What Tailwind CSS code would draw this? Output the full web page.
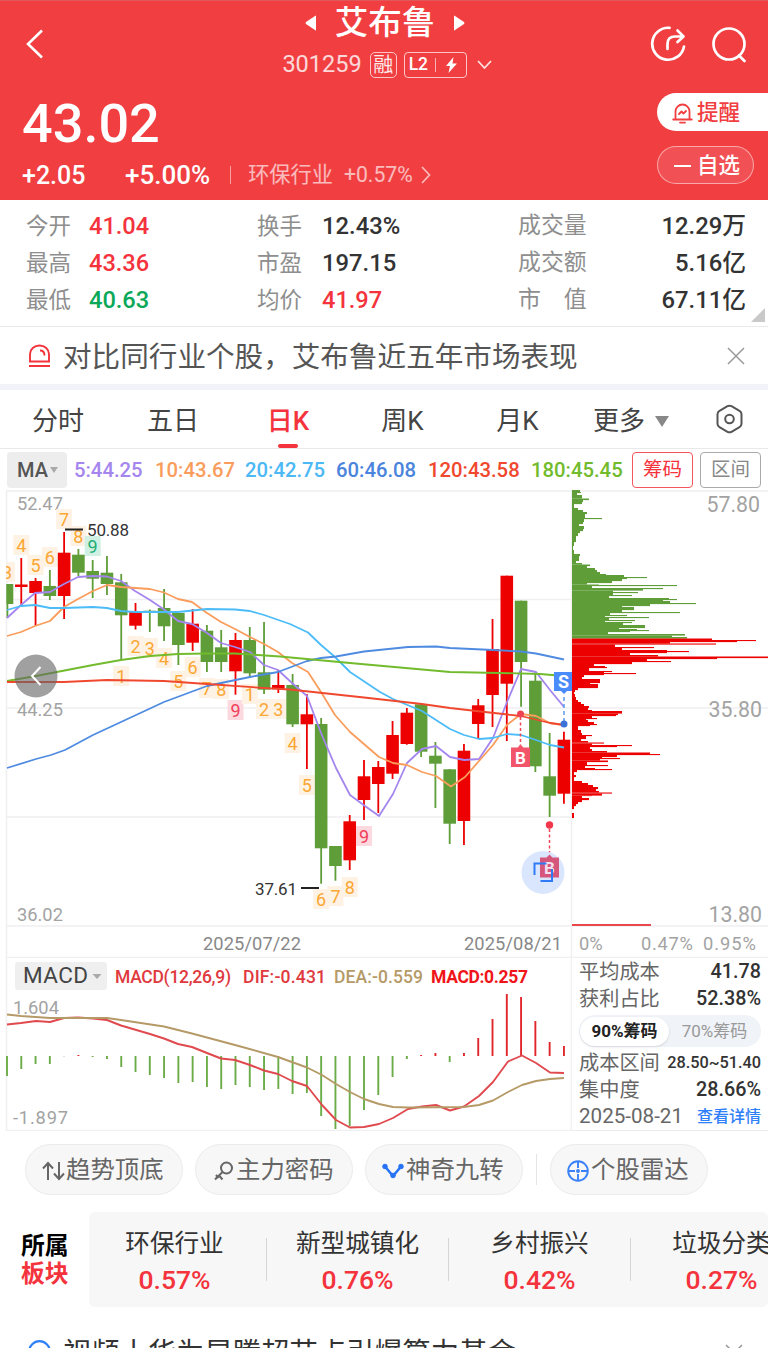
<!doctype html>
<html lang="zh-CN">
  <head>
    <title>艾布鲁 301259</title>
    <meta charset="UTF-8" />
    <meta name="viewport" content="width=device-width, initial-scale=1" />
    <script src="https://cdn.jsdelivr.net/npm/@tailwindcss/browser@4"></script>
  </head>
  <body
    class="w-[768px] h-[1348px] overflow-hidden bg-white text-[#333] leading-none whitespace-nowrap font-['Roboto','Noto_Sans_CJK_SC',sans-serif]"
  >
    <!--Header-->
    <header class="h-[200px] bg-[#f03e41] text-white border-t border-[#e0585a] flex flex-col">
      <div class="h-[88px] grid grid-cols-[283px_208px_1fr]">
        <div class="pl-[26px] pt-[28px]">
          <svg width="18" height="30" viewBox="0 0 18 30" fill="none" stroke="#fff" stroke-width="2.6"><path d="M16 1.5 2 15 16 28.500" /></svg>
        </div>
        <div class="flex flex-col items-center pt-[1px]">
          <div class="flex items-center h-[42px] gap-[18px] pr-[4px]">
            <svg width="12" height="16" viewBox="0 0 12 16" fill="#fff"><path d="M11 1v14q0 1-1 0L1 9q-1-1 0-2l9-6q1-1 1 0Z" /></svg>
            <h1 class="text-[33.5px] font-medium">艾布鲁</h1>
            <svg width="12" height="16" viewBox="0 0 12 16" fill="#fff"><path d="M1 1v14q0 1 1 0l9-6q1-1 0-2L2 1Q1 0 1 1Z" /></svg>
          </div>
          <div class="flex items-center h-[42px]">
            <span class="text-[23.500px] text-white/80">301259</span>
            <span class="ml-[8px] w-[27px] h-[26px] border-[1.500px] border-white/70 rounded-[5px] text-[20px] flex items-center justify-center text-white/90">融</span>
            <span class="ml-[7px] w-[63px] h-[26px] border-[1.500px] border-white/70 rounded-[4px] text-[17.500px] font-medium flex items-center pl-[4px]">
              L2
              <i class="w-px h-[14px] bg-white/60 ml-[7px]"></i>
              <svg class="ml-[9px]" width="13" height="16" viewBox="0 0 13 16" fill="#fff"><path d="M8.500 0 1 9h4l-1.500 7L12 6.500H7.500Z" /></svg>
            </span>
            <svg class="ml-[10px]" width="15" height="10" viewBox="0 0 15 10" fill="none" stroke="#fff" stroke-opacity=".85" stroke-width="1.800"><path d="m1 1 6.500 7L14 1" /></svg>
          </div>
        </div>
        <div class="flex justify-end gap-[26px] pt-[25px] pr-[22px]">
          <svg width="36" height="37" viewBox="0 0 36 37" fill="none" stroke="#fff" stroke-width="2.700" stroke-linecap="round" stroke-linejoin="round">
            <path d="M19.500 1.800A16 16 0 1 0 34 20.500" />
            <path d="M17.500 23v-5q0-7.500 7.500-7.500h8M27.500 4.500l6 6-6 5.500" />
          </svg>
          <svg width="34" height="37" viewBox="0 0 34 37" fill="none" stroke="#fff" stroke-width="2.700" stroke-linecap="round">
            <circle cx="17" cy="18" r="15.500" />
            <path d="m27 29.500 5.500 5.500" />
          </svg>
        </div>
      </div>
      <div class="flex justify-between">
        <div class="pl-[22px]">
          <div class="text-[54px] font-medium h-[69px] flex items-center">43.02</div>
          <div class="flex items-center h-[34px]">
            <span class="text-[25px] font-medium w-[103px]">+2.05</span>
            <span class="text-[26px] font-medium">+5.00%</span>
            <i class="w-px h-[18px] bg-white/50 ml-[20px] mr-[17px]"></i>
            <span class="text-[21.200px] text-white/65">环保行业</span>
            <span class="text-[21.200px] text-white/65 ml-[11px]">+0.57%</span>
            <svg class="ml-[8px]" width="10" height="18" viewBox="0 0 10 18" fill="none" stroke="#fff" stroke-opacity=".65" stroke-width="1.700"><path d="m1 1 7.500 8L1 17" /></svg>
          </div>
        </div>
        <div class="w-[111px] pt-[4px]">
          <div class="h-[38px] bg-white rounded-l-full text-[#f03e41] flex items-center pl-[15px] pt-[1px] text-[21.500px] font-medium">
            <svg class="mr-[4px]" width="21" height="22" viewBox="0 0 21 22" fill="none" stroke="#f03e41" stroke-width="1.800" stroke-linecap="round" stroke-linejoin="round">
              <path d="M3.500 17V9.500a7 7 0 0 1 14 0V17M1.200 17.500h18.600M8 20.600h5M7 12l2.500-2.500 2 2L14 9" />
            </svg>
            提醒
          </div>
          <div class="mt-[15px] w-[97px] h-[38px] rounded-full border border-white/50 bg-white/10 flex items-center pl-[16px] pt-[2px] text-[21.500px] font-medium">
            <i class="w-[17px] h-[2px] bg-white mr-[6px]"></i>自选
          </div>
        </div>
      </div>
    </header>

    <!--Quote-->
    <section class="relative h-[127px] border-b border-[#e9e9e9] pt-[8px] pl-[26px] pr-[22px] grid grid-cols-[231px_261px_1fr] grid-rows-[37px_37px_37px] items-center text-[23.800px] font-medium">
      <div class="flex items-center"><span class="w-[63px] text-[22.500px] font-normal text-[#8e8e8e]">今开</span><b class="text-[23.600px] font-medium text-[#f4333c]">41.04</b></div>
      <div class="flex items-center"><span class="w-[65px] text-[22.500px] font-normal text-[#8e8e8e]">换手</span>12.43%</div>
      <div class="flex items-center justify-between"><span class="text-[22.900px] font-normal text-[#8e8e8e]">成交量</span>12.29万</div>
      <div class="flex items-center"><span class="w-[63px] text-[22.500px] font-normal text-[#8e8e8e]">最高</span><b class="text-[23.600px] font-medium text-[#f4333c]">43.36</b></div>
      <div class="flex items-center"><span class="w-[65px] text-[22.500px] font-normal text-[#8e8e8e]">市盈</span>197.15</div>
      <div class="flex items-center justify-between"><span class="text-[22.900px] font-normal text-[#8e8e8e]">成交额</span>5.16亿</div>
      <div class="flex items-center"><span class="w-[63px] text-[22.500px] font-normal text-[#8e8e8e]">最低</span><b class="text-[23.600px] font-medium text-[#0aa858]">40.63</b></div>
      <div class="flex items-center"><span class="w-[65px] text-[22.500px] font-normal text-[#8e8e8e]">均价</span><b class="text-[23.600px] font-medium text-[#f4333c]">41.97</b></div>
      <div class="flex items-center justify-between"><span class="text-[22.900px] font-normal text-[#8e8e8e]">市　值</span>67.11亿</div>
      <svg class="absolute right-[3px] bottom-[4px]" width="14" height="14" viewBox="0 0 14 14" fill="#c9c9c9"><path d="M14 0v14H0Z" /></svg>
    </section>

    <!--Notice-->
    <section class="h-[57px] flex items-center pl-[28px] pr-[23px]">
      <svg width="23" height="24" viewBox="0 0 23 24" fill="none" stroke="#f4333c" stroke-width="1.900">
        <path d="M2 17.500V10a9.500 8.500 0 0 1 19 0v7.500ZM1 22h21M12 6.500q4.500 0 4.500 5" />
      </svg>
      <span class="ml-[12px] mt-[3px] text-[28.600px] text-[#555]">对比同行业个股，艾布鲁近五年市场表现</span>
      <svg class="ml-auto" width="18" height="18" viewBox="0 0 18 18" stroke="#999" stroke-width="1.500"><path d="m1 1 16 16M17 1 1 17" /></svg>
    </section>
    <div class="h-[6px] bg-[#f2f3f8]"></div>

    <!--Tabs-->
    <nav class="h-[59px] border-b border-[#e9e9e9] flex text-[26px] text-[#444]">
      <span class="w-[116px] pt-[18px] text-center">分时</span>
      <span class="w-[114px] pt-[18px] text-center">五日</span>
      <span class="w-[116px] pt-[18px] flex flex-col items-center text-[#f4333c] font-medium">日K<i class="mt-[10px] w-[20px] h-[5px] rounded-full bg-[#f4333c]"></i></span>
      <span class="w-[113px] pt-[18px] text-center">周K</span>
      <span class="w-[117px] pt-[18px] text-center">月K</span>
      <span class="w-[110px] pl-[17px] pt-[18px] flex">更多<svg class="ml-[10px] mt-[8px]" width="14" height="11" viewBox="0 0 14 11" fill="#888"><path d="M0 0h14L7 11Z" /></svg></span>
      <svg class="ml-[29px] mt-[14px]" width="29" height="30" viewBox="0 0 29 30" fill="none" stroke="#555" stroke-width="2">
        <path d="M12.500 2.200q2-1.100 4 0l8 4.600q2 1.100 2 3.400v9.600q0 2.300-2 3.400l-8 4.600q-2 1.100-4 0l-8-4.600q-2-1.100-2-3.400v-9.600q0-2.300 2-3.400Z" />
        <circle cx="14.500" cy="15" r="4.300" />
      </svg>
    </nav>

    <!--Moving averages-->
    <section class="h-[41px] flex items-center pl-[7px] pt-[1px] text-[20.300px] font-medium">
      <span class="w-[60px] h-[36px] rounded-[4px] bg-[#ededed] flex items-center pl-[10px] text-[20px] text-[#555]">MA<svg class="ml-[2px]" width="8" height="6" viewBox="0 0 8 6" fill="#aaa"><path d="M0 0h8L4 6Z" /></svg></span>
      <span class="ml-[7px] w-[81px] text-[#a486ee]">5:44.25</span>
      <span class="w-[90px] text-[#fa9d5c]">10:43.67</span>
      <span class="w-[91px] text-[#4cb9f5]">20:42.75</span>
      <span class="w-[92px] text-[#4a84dc]">60:46.08</span>
      <span class="w-[103px] text-[#f0482e]">120:43.58</span>
      <span class="w-[101px] text-[#71bb2c]">180:45.45</span>
      <span class="w-[61px] h-[36px] border border-[#f4555c] rounded-[4px] flex items-center justify-center text-[19.500px] font-normal text-[#f4333c]">筹码</span>
      <span class="ml-[7px] w-[61px] h-[36px] border border-[#aaa] rounded-[4px] flex items-center justify-center text-[19.500px] font-normal text-[#888]">区间</span>
    </section>

    <!--K line and chip distribution, y axis starts at 490-->
    <svg id="kline" class="block" width="768" height="468" viewBox="0 490 768 468">
      <g stroke="#f0f0f2" stroke-width="1.500">
        <path d="M6 491h762M6 599.500h566M6 708h762M6 817h566M6 926h762M6 957.500h762M6.500 490v468M571.500 490v468" />
      </g>
      <g font-size="18.300" fill="#a3a3a3">
        <text x="17" y="510">52.47</text>
        <text x="17" y="715.500">44.25</text>
        <text x="17" y="920.500">36.02</text>
        <g fill="#888">
          <text x="203" y="949.500" textLength="98">2025/07/22</text>
          <text x="464" y="949.500" textLength="98">2025/08/21</text>
        </g>
        <text x="579" y="949.500">0%</text>
        <text x="641" y="949.500" textLength="52">0.47%</text>
        <text x="703" y="949.500" textLength="53">0.95%</text>
        <g font-size="21.300" text-anchor="end">
          <text x="760" y="511.500">57.80</text>
          <text x="762" y="716.500">35.80</text>
          <text x="762" y="922">13.80</text>
        </g>
      </g>
      <g id="marks" font-size="18" text-anchor="middle"></g>
      <g id="candles"></g>
      <g id="averages" fill="none" stroke-width="1.800" stroke-linejoin="round"></g>
      <g id="chips"></g>
      <path d="M572 925h79" stroke="#e8474b" stroke-width="2" />
      <g font-size="17" fill="#333">
        <path d="M65 529.500h18M301 888h18" stroke="#222" stroke-width="2" />
        <text x="87" y="536" textLength="42">50.88</text>
        <text x="255" y="894.500" textLength="42">37.61</text>
      </g>
      <!-- trade points -->
      <g font-size="17" font-weight="700" fill="#fff" text-anchor="middle">
        <path d="M520.500 717v29" stroke="#f0465a" stroke-width="1.500" stroke-dasharray="3 2.500" />
        <circle cx="520.500" cy="714" r="3.500" fill="#ee4350" />
        <path d="M511 747.500h6.500l3-3 3 3h6.500v19.500h-19Z" fill="#f2556a" />
        <text x="520.500" y="763.500">B</text>
        <path d="M564 697v24" stroke="#5b9bf2" stroke-width="1.500" stroke-dasharray="4 3" />
        <circle cx="564" cy="724" r="3.500" fill="#3a72d8" />
        <path d="M554 672h18v19h-5l-3 3-3-3h-7Z" fill="#4a8cfb" />
        <text x="563.500" y="688" font-size="18">S</text>
        <path d="M549.500 829v26" stroke="#f0465a" stroke-width="1.500" stroke-dasharray="3 2.500" />
        <circle cx="549.500" cy="825" r="3.700" fill="#f0374b" />
        <circle cx="543" cy="872.500" r="21.500" fill="#dae6fd" />
        <path d="M540 857.500h6.500l3-3 3 3h6.500v20h-19Z" fill="#d5587c" />
        <text x="549.500" y="873.500" fill="#f4dfee">B</text>
        <path d="M534.500 875v-11.500h12M540.500 881h11.500v-12" fill="none" stroke="#2f7bf6" stroke-width="2" />
      </g>
      <circle cx="36" cy="676" r="21.500" fill="#666" fill-opacity=".62" />
      <path d="m40.500 667-8.500 9 8.500 9" fill="none" stroke="#fff" stroke-width="2" />
    </svg>

    <!--MACD and chip summary-->
    <section class="h-[173px] flex">
      <svg class="block" width="572" height="173" viewBox="0 958 572 173">
        <path d="M6.500 958v172.500H571.500V958" fill="none" stroke="#f0f0f2" stroke-width="1.500" />
        <rect x="15" y="962" width="92" height="28" rx="3" fill="#efefef" />
        <text x="23" y="983" font-size="22.500" fill="#444" textLength="65">MACD</text>
        <path d="M92.500 974h9l-4.500 5Z" fill="#aaa" />
        <g font-size="17.500" font-weight="500">
          <text x="115" y="983" fill="#e0393e" textLength="116">MACD(12,26,9)</text>
          <text x="243" y="983" fill="#e0393e" textLength="83">DIF:-0.431</text>
          <text x="334" y="983" fill="#b59a67" textLength="89">DEA:-0.559</text>
          <text x="431" y="983" fill="#f01418" font-weight="700" textLength="97">MACD:0.257</text>
        </g>
        <g font-size="18.300" fill="#a3a3a3">
          <text x="13" y="1014">1.604</text>
          <text x="13" y="1124" textLength="55">-1.897</text>
        </g>
        <g id="macd" fill="none" stroke-width="1.900" stroke-linejoin="round"></g>
      </svg>
      <div class="w-[196px] border-b border-[#ececee] pl-[7px] pr-[7px] pt-[1px] text-[19.800px] font-medium flex flex-col">
        <div class="h-[27px] flex items-center justify-between"><span class="text-[20.200px] font-normal text-[#666]">平均成本</span>41.78</div>
        <div class="h-[27px] flex items-center justify-between"><span class="text-[20.200px] font-normal text-[#666]">获利占比</span>52.38%</div>
        <div class="my-[3px] h-[32px] rounded-full bg-[#f0f3f8] flex items-center p-px text-[17px]">
          <span class="w-[89px] h-[29px] rounded-full bg-white shadow-sm flex items-center justify-center font-bold text-[#222]">90%筹码</span>
          <span class="flex-1 text-center font-normal text-[#999]">70%筹码</span>
        </div>
        <div class="h-[27px] flex items-center justify-between text-[16.300px]"><span class="text-[20.200px] font-normal text-[#666]">成本区间</span>28.50~51.40</div>
        <div class="h-[27px] flex items-center justify-between"><span class="text-[20.200px] font-normal text-[#666]">集中度</span>28.66%</div>
        <div class="h-[27px] flex items-center justify-between text-[#666] font-normal"><span class="text-[20.600px]">2025-08-21</span><a class="text-[16px] font-medium text-[#2f80f8]">查看详情</a></div>
      </div>
    </section>

    <!--Tools-->
    <section class="h-[81px] flex items-start pt-[13px] pl-[25px] text-[24.400px] text-[#666]">
      <span class="w-[158px] h-[51px] rounded-full bg-[#f7f7f7] border border-[#ebebeb] flex items-center pl-[16px] pt-[2px]">
        <svg class="mr-[1px]" width="23" height="20" viewBox="0 0 23 20" fill="none" stroke="#666" stroke-width="2"><path d="M6 19V2M1 7.500 6 2l5 5.500M17 1v17M12 12.500l5 5.500 5-5.500" /></svg>趋势顶底
      </span>
      <span class="ml-[12px] w-[158px] h-[51px] rounded-full bg-[#f7f7f7] border border-[#ebebeb] flex items-center pl-[18px] pt-[2px]">
        <svg class="mr-[2px]" width="20" height="20" viewBox="0 0 20 20" fill="none" stroke="#666" stroke-width="2"><circle cx="12.500" cy="7" r="5.500" /><path d="M8.500 11 1 18.500M5 14.500l3.500 4M2 14l2.500 3" /></svg>主力密码
      </span>
      <span class="ml-[12px] w-[158px] h-[51px] rounded-full bg-[#f7f7f7] border border-[#ebebeb] flex items-center pl-[16px] pt-[2px]">
        <svg class="mr-[2px]" width="22" height="16" viewBox="0 0 22 16" fill="#2673f5" stroke="#2673f5"><path d="M3 3.500 11 13l8-9.500" fill="none" stroke-width="2.500" /><circle cx="3" cy="3.500" r="2.300" /><circle cx="19" cy="3.500" r="2.300" /><circle cx="11" cy="12.500" r="2.300" /></svg>神奇九转
      </span>
      <i class="mt-[10px] ml-[13px] w-px h-[31px] bg-[#e5e5e5]"></i>
      <span class="ml-[13px] w-[158px] h-[51px] rounded-full bg-[#f7f7f7] border border-[#ebebeb] flex items-center pl-[16px] pt-[2px]">
        <svg class="mr-[2px]" width="22" height="22" viewBox="0 0 22 22" fill="none" stroke="#3a80f6" stroke-width="1.900"><circle cx="11" cy="11" r="9.800" /><path d="M11 1v7M11 14v7M1 11h7M14 11h7" /><circle cx="11" cy="11" r="1" fill="#3a80f6" /></svg>个股雷达
      </span>
    </section>

    <!--Sectors-->
    <section class="flex h-[95px]">
      <div class="w-[89px] pl-[21px] pt-[20px] text-[23.800px] font-bold leading-[28px] text-black">所属<br /><span class="text-[#f4333c]">板块</span></div>
      <div class="w-[679px] overflow-hidden rounded-[6px] bg-[#f7f7f7] flex text-center text-[24.600px]">
        <div class="w-[177px] shrink-0 pr-[6px] flex flex-col pt-[20px] gap-[10px]">环保行业<b class="text-[26.500px] font-medium text-[#f4333c]">0.57%</b></div>
        <i class="mt-[26px] w-px h-[43px] bg-[#d5d5d5] shrink-0"></i>
        <div class="w-[181px] shrink-0 flex flex-col pt-[20px] gap-[10px]">新型城镇化<b class="text-[26.500px] font-medium text-[#f4333c]">0.76%</b></div>
        <i class="mt-[26px] w-px h-[43px] bg-[#d5d5d5] shrink-0"></i>
        <div class="w-[181px] shrink-0 flex flex-col pt-[20px] gap-[10px]">乡村振兴<b class="text-[26.500px] font-medium text-[#f4333c]">0.42%</b></div>
        <i class="mt-[26px] w-px h-[43px] bg-[#d5d5d5] shrink-0"></i>
        <div class="w-[181px] shrink-0 flex flex-col pt-[20px] gap-[10px]">垃圾分类<b class="text-[26.500px] font-medium text-[#f4333c]">0.27%</b></div>
      </div>
    </section>

    <!--News-->
    <section class="mt-[28px] h-[38px] flex pl-[28px] pr-[25px]">
      <svg class="mt-[5px]" width="23" height="23" viewBox="0 0 23 23" fill="none" stroke="#2f80f8" stroke-width="2.200"><circle cx="11.500" cy="11.500" r="10.300" /></svg>
      <span class="ml-[12px] text-[28.300px] mt-[5px] text-[#333]">视频丨华为昇腾超节点引爆算力基金</span>
      <svg class="ml-auto mt-[9px]" width="18" height="18" viewBox="0 0 18 18" stroke="#999" stroke-width="1.500"><path d="m1 1 16 16M17 1 1 17" /></svg>
    </section>

    <script>
      const RED = "#ec0000";
      const GREEN = "#5e9d38";
      const xOf = (i) => 7 + i * 14.28;

      function draw(id, name, attrs, text) {
        const el = document.createElementNS("http://www.w3.org/2000/svg", name);
        for (const key in attrs) el.setAttribute(key, attrs[key]);
        if (text) el.textContent = text;
        document.getElementById(id).appendChild(el);
      }

      // up or down, wick top, body top, body bottom, wick bottom
      const candles = [
        [0, 584, 584, 604, 618], [1, 558, 584.5, 587, 605], [1, 578, 581, 593, 626], [0, 570, 586, 596, 600],
        [1, 532, 552.7, 596, 619], [0, 549, 554.7, 572.7, 576], [0, 560, 571, 578.7, 598], [0, 556, 572.7, 584, 595],
        [0, 574, 582.3, 615.3, 660], [1, 603, 611, 625.7, 629.5], [0, 609.5, 610.7, 612.7, 632], [0, 589, 608, 626.3, 641],
        [0, 613, 613, 645, 665], [1, 609, 623.7, 642.7, 651], [0, 625, 630.7, 662, 672], [0, 630, 647.3, 662, 672],
        [1, 633, 640, 671.3, 694.7], [0, 627, 640, 673.3, 678], [0, 622, 672.3, 689.7, 694], [1, 670, 685, 689.3, 693],
        [0, 674, 685, 724.3, 727], [1, 694, 714.3, 724.3, 769], [0, 718, 724, 848.3, 883.7], [0, 846, 846, 866, 880.7],
        [1, 815, 821.3, 860.3, 870], [1, 760, 776.3, 800, 820], [1, 761, 767, 784, 813], [1, 721, 735, 773.7, 779],
        [1, 708, 712.7, 744, 744.7], [0, 704, 704.3, 751.7, 757], [0, 742, 755.7, 763.7, 808], [0, 769, 769.3, 823.7, 844],
        [1, 744, 750.7, 821, 845], [1, 699, 705.3, 724, 739], [1, 619, 649, 695, 727], [1, 575.7, 575.7, 683.7, 741],
        [0, 600.7, 600.7, 662, 706.7], [0, 672.7, 680.7, 766.3, 772], [0, 733, 776.3, 795.7, 817], [1, 731.7, 739.7, 793.7, 803.7],
      ];
      candles.forEach(([up, top, open, close, bottom], i) => {
        const x = xOf(i);
        const fill = up ? RED : GREEN;
        const left = Math.max(x - 6.3, 6.5);
        draw("candles", "rect", { x: Math.max(x - 0.9, 6.5), y: top, width: 1.8, height: bottom - top, fill });
        draw("candles", "rect", { x: left, y: open, width: x + 6.3 - left, height: close - open, fill });
      });

      const averages = [
        ["#a486ee", "7,618 21,605 35,593 50,592 64,584 78,577 93,576 107,576.5 121,581 135,591 150,600 164,609.500 178,621 192,624 207,633 221,643 235,647 250,652 264,665 278,670 292,683 307,696 321,733 336,768 350,795 365,806 379,816 393,794 407,763 422,749 436,746 450,757 464,760 479,759 493,738 507,702 521,669 536,672 550,690 564,707"],
        ["#fa9d5c", "7,636 21,632 35,626 50,621 64,607 78,599 93,591 107,585 121,587 150,589 164,592.500 178,599 192,602 207,613 221,622 235,629 250,637 264,644 278,652 292,663 308,672 321,692 335,715 350,732 379,757 393,763 407,765 422,772 436,776 451,786.500 465,777 479,761 493,745 507,725 521,714 536,716 550,723 564,725"],
        ["#4cbcf8", "7,610 21,606 35,605 50,608 64,608 93,607 107,608 121,611 135,612 178,612 207,609 235,609.500 250,611 264,615 290,624 308,632.500 321,645 335,657 350,672 380,692 393,699 422,711 436,720 450,729 464,735 479,739 493,738 507,734 521,735 536,740 550,745 564,747.500"],
        ["#4f8be0", "7,768 36,759 51,755 65,750 93,735 121,722 164,702 207,686 221,683 250,677 278,672 307,661 321,658 336,656.500 364,651.500 408,647 436,646.500 450,648 493,650 521,651.500 536,653.500 564,659.500"],
        ["#71bb2c", "7,681 36,676 93,665 121,660 150,656 178,654 207,653.500 235,653.500 280,656.500 350,663 450,672 500,673 540,674 564,676"],
        ["#f0482e", "7,682 64,682 107,680 164,681 207,684 264,688 290,689.500 364,697.500 422,704 450,708 485,712 521,716 550,723 564,725"],
      ];
      averages.forEach(([stroke, points]) => draw("averages", "polyline", { points, stroke }));

      // nine-turn counters: candle index, center y, number
      const marks = [
        [0, 572, 3], [1, 545, 4], [2, 565, 5], [3, 557, 6], [4, 519, 7], [5, 536, 8], [6, 546, 9, "#1eae74", "#d0f0e3"],
        [8, 676, 1], [9, 646, 2], [10, 648, 3], [11, 658, 4], [12, 681, 5], [13, 667, 6], [14, 688, 7], [15, 689, 8],
        [16, 710, 9, "#f0405a", "#fcd9de"], [17, 694, 1], [18, 709, 2], [19, 709, 3], [20, 743, 4], [21, 785, 5],
        [22, 899, 6], [23, 896, 7], [24, 887, 8], [25, 836, 9, "#f0405a", "#fcd9de"],
      ];
      marks.forEach(([i, y, n, fill = "#fba733", back = "#fef2e4"]) => {
        const left = Math.max(xOf(i) - 8, 6.5);
        draw("marks", "rect", { x: left, y: y - 10, width: xOf(i) + 8 - left, height: 20, fill: back });
        draw("marks", "text", { x: xOf(i), y: y + 6.5, fill }, n);
      });
      // hides the half digit left of the chart
      draw("marks", "rect", { x: 0, y: 555, width: 6, height: 40, fill: "#fff" });

      // chip histogram: y, width
      const chips = [
        490,8,492,9,493,5,495,10,497,10,498.5,17,500,11,502,10,504,2,508,6,510,11,512,15,514,13,516,13,518,30,519,12,522,11,524,7,
        526,12,529,11,531,8,533,6,536,4,539,4,542,2,546,1,550,2,554,8,556,7,558,7,561,4,563,10,564.5,18,566,15,568,23,570,25,572,28,
        574,34,575,52,577,75,578,55,579,50,581,40,583,15,584.5,27,585,105,586,20,588,91,589,71,590.5,41,592,66,593,41,595,60,596,37,
        598,97,599,105,600,91,601,98,603,124,604,78,606,50,607,62,610,50,612,108,613,38,615,55,616,33,617,77,618,37,620,63,621,33,
        622,60,623,51,625,73,628,47,629,65,630,77,631,58,632,36,634,113,635.5,100,637,115,
        638.5,140,640,184,641,165,642,98,643.5,144,644.5,43,647,82,648,50,650,95,651,117,652,95,653,58,655,86,656.5,196,658,145,
        659,75,661,99,662,60,664,22,666,33,667,35,668,17,671,40,672,32,673,64,674,32,675,12,677,10,679,28,681,28,683,18,684,26,
        686,26,688,6,690,3,692,2,694,3,697,4,700,6,702,9,704,12,706,17,708,16,710,20,711,50,713.5,46,715,44,716,20,718,25,719,14,
        720,16,722,22,724,25,725,18,726,6,730,9,733,10,735,20,736,14,739,9,741,16,742.5,32,743.5,20,745,60,746,45,747,18,749,20,
        751,35,752.5,78,754,88,755,45,757,30,758,48,759,28,760.5,36,762,15,763,15,765,36,766,13,768,23,769,40,770,5,772,2,775,4,
        777,2,781,10,783,16,785,21,787,26,789,24,791,27,792.5,40,793.5,30,795.5,20,796,10,798,17,800,10,802,6,804,4,806,2,809,1,
        813,2,818,0,
      ];
      for (let k = 0; k < chips.length - 2; k += 2) {
        if (chips[k] === 809) continue;
        draw("chips", "rect", {
          x: 572,
          y: chips[k],
          width: chips[k + 1],
          height: chips[k + 2] - chips[k] + 0.1,
          fill: chips[k] < 638 ? GREEN : RED,
        });
      }

      // MACD bars, end y of each
      const zero = 1056;
      const bars = [
        1076, 1069, 1064, 1064, 1056.3, 1055, 1057, 1059, 1067, 1072, 1075, 1078, 1083, 1082, 1087, 1089, 1085, 1087, 1090, 1089,
        1094, 1093, 1116, 1129, 1126, 1110, 1095, 1077, 1059, 1055, 1053, 1062, 1053, 1038, 1019, 994, 997, 1021, 1042, 1046,
      ];
      bars.forEach((y, i) => {
        draw("macd", "path", { d: `M${xOf(i)} ${zero}V${y}`, stroke: y < zero ? "#e0252b" : "#6bac48" });
      });
      draw("macd", "polyline", {
        stroke: "#e0494e",
        points: "7,1024.500 21,1023 36,1021 50,1022 64,1018 78,1017.500 93,1018.500 107,1020 121,1025.500 150,1034 164,1038.500 178,1044 192,1047 207,1053 221,1058.500 235,1060 250,1065 264,1070.500 278,1074 292,1081 307,1086 322,1105 336,1120 350,1127.500 364,1127 379,1124 393,1118 408,1109 422,1106.500 436,1105 450,1110.500 464,1106.500 479,1096 493,1082 508,1061.500 522,1055.500 536,1063 550,1072.500 564,1073",
      });
      draw("macd", "polyline", {
        stroke: "#b59a67",
        points: "7,1014.500 21,1016 50,1018 107,1018 121,1020 164,1026.500 192,1033.500 235,1045 278,1057 307,1067.500 322,1075 336,1084 350,1092 364,1099 379,1104 393,1107 408,1107.500 464,1107 479,1105 493,1100.500 508,1092 522,1085 536,1081 550,1079 564,1078",
      });
    </script>
  </body>
</html>
